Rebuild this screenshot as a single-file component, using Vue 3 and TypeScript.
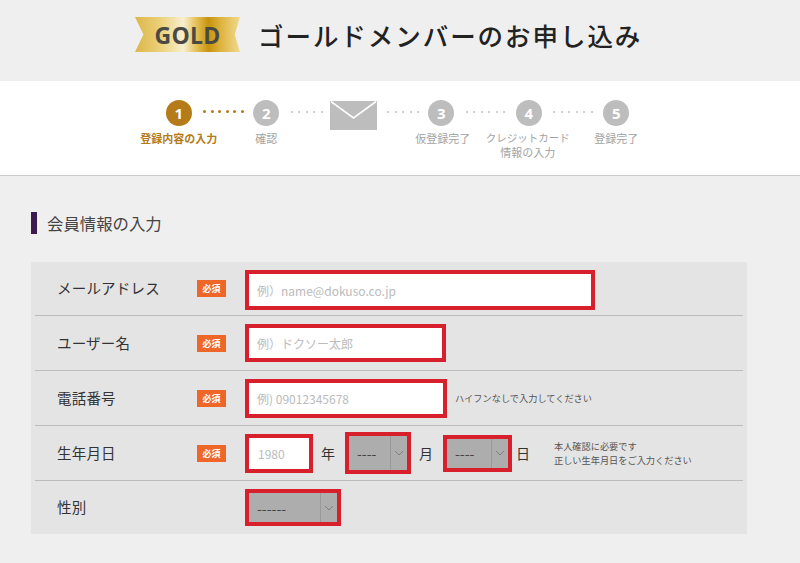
<script setup lang="ts">
interface Step { lines: string[]; num?: number; dotsAfter: number; active?: boolean; mail?: boolean }
const steps: Step[] = [
  { num: 1, lines: ['登録内容の入力'], dotsAfter: 6, active: true },
  { num: 2, lines: ['確認'], dotsAfter: 5 },
  { lines: [], dotsAfter: 5, mail: true },
  { num: 3, lines: ['仮登録完了'], dotsAfter: 6 },
  { num: 4, lines: ['クレジットカード', '情報の入力'], dotsAfter: 6 },
  { num: 5, lines: ['登録完了'], dotsAfter: 0 },
]
</script>

<template>
  <div class="page">
    <header class="top">
      <div class="ribbon"><span>GOLD</span></div>
      <h1>ゴールドメンバーのお申し込み</h1>
    </header>

    <nav class="stepper">
      <div v-for="(s, i) in steps" :key="i" class="step" :class="{ active: s.active }">
        <div class="icon-row">
          <svg v-if="s.mail" class="mail" viewBox="0 0 47 29" width="47" height="29">
            <rect width="47" height="29" fill="#bdbdbd" />
            <path d="M1 0.5 L23.5 17 L46 0.5" fill="none" stroke="#fff" stroke-width="1.6" />
          </svg>
          <div v-else class="circle">{{ s.num }}</div>
          <div v-if="s.dotsAfter" class="dots" :class="{ gold: s.active }">
            <i v-for="d in s.dotsAfter" :key="d"></i>
          </div>
        </div>
        <div class="step-label">
          <div v-for="line in s.lines" :key="line" :class="{ condensed: line.length > 6 && !s.active }">{{ line }}</div>
        </div>
      </div>
    </nav>

    <main class="content">
      <h2>会員情報の入力</h2>
      <div class="table">
        <div class="row first">
          <div class="label">メールアドレス</div>
          <span class="badge">必須</span>
          <div class="fields">
            <input class="box w-mail" placeholder="例）name@dokuso.co.jp" />
          </div>
        </div>
        <div class="row">
          <div class="label">ユーザー名</div>
          <span class="badge">必須</span>
          <div class="fields">
            <input class="box w-name" placeholder="例）ドクソー太郎" />
          </div>
        </div>
        <div class="row">
          <div class="label">電話番号</div>
          <span class="badge">必須</span>
          <div class="fields">
            <input class="box w-tel" placeholder="例) 09012345678" />
            <p class="hint hint-tel">ハイフンなしで入力してください</p>
          </div>
        </div>
        <div class="row">
          <div class="label">生年月日</div>
          <span class="badge">必須</span>
          <div class="fields">
            <input class="box w-year" placeholder="1980" />
            <span class="unit">年</span>
            <div class="select w-month">
              <select><option>----</option></select>
              <svg viewBox="0 0 10 6" width="10" height="6"><path d="M1 1 L5 5 L9 1" fill="none" stroke="#808080" /></svg>
            </div>
            <span class="unit">月</span>
            <div class="select w-day">
              <select><option>----</option></select>
              <svg viewBox="0 0 10 6" width="10" height="6"><path d="M1 1 L5 5 L9 1" fill="none" stroke="#808080" /></svg>
            </div>
            <span class="unit unit-day">日</span>
            <p class="hint hint-birth">本人確認に必要です<br />正しい生年月日をご入力ください</p>
          </div>
        </div>
        <div class="row last">
          <div class="label">性別</div>
          <span></span>
          <div class="fields">
            <div class="select w-sex">
              <select><option>------</option></select>
              <svg viewBox="0 0 10 6" width="10" height="6"><path d="M1 1 L5 5 L9 1" fill="none" stroke="#808080" /></svg>
            </div>
          </div>
        </div>
      </div>
    </main>
  </div>
</template>

<style scoped>
.page {
  width: 800px;
  height: 563px;
  overflow: hidden;
  background: #efefef;
  font-family: "Noto Sans CJK JP", "Noto Sans", sans-serif;
  color: #333;
}
.top {
  height: 81px;
  box-sizing: border-box;
  padding: 17px 0 0 135px;
  display: flex;
  align-items: flex-start;
  gap: 19px;
}
.ribbon {
  width: 105px;
  height: 35px;
  display: flex;
  align-items: center;
  justify-content: center;
  clip-path: polygon(0 0, 100% 0, 95% 50%, 100% 100%, 0 100%, 8% 50%);
  background: linear-gradient(90deg, #dcb64a 0%, #ecd27c 25%, #f7efcf 46%, #e6c25a 58%, #c8930f 70%, #dfb440 82%, #f0da90 100%);
}
.ribbon span {
  font-family: "Open Sans", sans-serif;
  font-weight: 700;
  font-size: 23px;
  line-height: 35px;
  padding-top: 2px;
  color: #4a4a44;
  letter-spacing: 0.2px;
}
h1 {
  margin: 0;
  font-size: 25.5px;
  line-height: 35px;
  font-weight: 500;
  letter-spacing: 1.95px;
  color: #222;
  margin-left: -1px;
}
.stepper {
  height: 95px;
  box-sizing: border-box;
  background: #fff;
  border-bottom: 1px solid #ccc;
  padding: 17px 0 0 135px;
  display: grid;
  grid-template-columns: repeat(6, 87.5px);
}
.step {
  display: flex;
  flex-direction: column;
  align-items: center;
  position: relative;
}
.icon-row {
  height: 29px;
  display: flex;
  align-items: center;
}
.circle {
  width: 26px;
  height: 26px;
  border-radius: 50%;
  background: #bdbdbd;
  color: #fff;
  font-family: "Open Sans", sans-serif;
  font-weight: 700;
  font-size: 15px;
  line-height: 26px;
  text-align: center;
}
.active .circle {
  background: #b57b18;
}
.mail {
  display: block;
  margin-top: 5px;
}
.dots {
  position: absolute;
  left: 68px;
  top: 13px;
  display: flex;
  gap: 5.6px;
}
.step:nth-child(3) .dots {
  left: 77px;
}
.dots i {
  width: 2px;
  height: 2px;
  border-radius: 50%;
  background: #c2c2c2;
}
.dots.gold {
  top: 12px;
  gap: 4.6px;
}
.dots.gold i {
  width: 3px;
  height: 3px;
  background: #b57b18;
}
.step-label {
  margin-top: 4px;
  font-size: 11px;
  line-height: 14px;
  color: #a3a3a3;
  text-align: center;
  white-space: nowrap;
}
.step:nth-child(4) .step-label {
  padding-left: 3px;
}
.step:nth-child(5) .step-label {
  padding-right: 2px;
}
.condensed {
  font-size: 10.5px;
}
.active .step-label {
  color: #b57b18;
  font-weight: 700;
}
.content {
  padding: 36px 0 0 31px;
}
h2 {
  margin: 0;
  height: 22px;
  border-left: 6px solid #3a1a50;
  padding-left: 10px;
  font-size: 16.4px;
  line-height: 22px;
  font-weight: 400;
  color: #444;
}
.table {
  margin-top: 28px;
  width: 716px;
  box-sizing: border-box;
  background: #e4e4e4;
  padding: 0 4px;
}
.row {
  display: grid;
  grid-template-columns: 140px 29px 1fr;
  align-items: center;
  height: 55px;
  box-sizing: border-box;
  padding-left: 22px;
  border-bottom: 1px solid #bbb;
}
.row.first {
  height: 54px;
}
.row.last {
  border-bottom: none;
  height: 53px;
}
.label {
  font-size: 14.5px;
  letter-spacing: 0.2px;
  color: #333;
  padding-bottom: 2px;
}
.badge {
  display: block;
  width: 29px;
  height: 17px;
  background: #ee6628;
  color: #fff;
  font-size: 9px;
  font-weight: 700;
  line-height: 17px;
  text-align: center;
}
.fields {
  display: flex;
  align-items: center;
  margin-left: 19px;
}
.box {
  box-sizing: border-box;
  height: 38px;
  border: 4px solid #d8202c;
  background: #fff;
  padding: 0 8px;
  font-family: inherit;
  font-size: 12px;
  color: #333;
  outline: none;
  border-radius: 0;
}
.box::placeholder {
  color: #bbb;
  opacity: 1;
}
.w-mail {
  width: 350px;
  height: 40px;
  margin-top: 3px;
}
.w-name {
  width: 201px;
}
.w-tel {
  width: 202px;
  height: 39px;
}
.w-year {
  width: 68px;
  height: 39px;
  padding-left: 9px;
}
.unit {
  width: 32px;
  padding-right: 2px;
  box-sizing: border-box;
  text-align: center;
  font-size: 14px;
}
.unit-day {
  width: 22px;
  padding-right: 0;
}
.select {
  position: relative;
  box-sizing: border-box;
  height: 37px;
  border: 4px solid #d8202c;
  background: #adadad;
}
.select select {
  appearance: none;
  width: 100%;
  height: 100%;
  border: none;
  outline: none;
  background: transparent;
  padding: 0 0 0 8px;
  font-family: inherit;
  font-size: 14px;
  color: #444;
  border-radius: 0;
}
.select::after {
  content: "";
  position: absolute;
  right: 16px;
  top: 0;
  bottom: 0;
  border-left: 1px solid #999;
}
.select svg {
  position: absolute;
  right: 3px;
  top: 50%;
  margin-top: -3px;
  pointer-events: none;
}
.w-month {
  width: 66px;
  height: 42px;
}
.w-day {
  width: 69px;
}
.w-sex {
  width: 96px;
}
.hint {
  margin: 0;
  font-size: 9.2px;
  line-height: 14px;
  color: #555;
}
.hint-tel {
  margin-left: 8px;
}
.hint-birth {
  margin-left: 20px;
}
</style>
